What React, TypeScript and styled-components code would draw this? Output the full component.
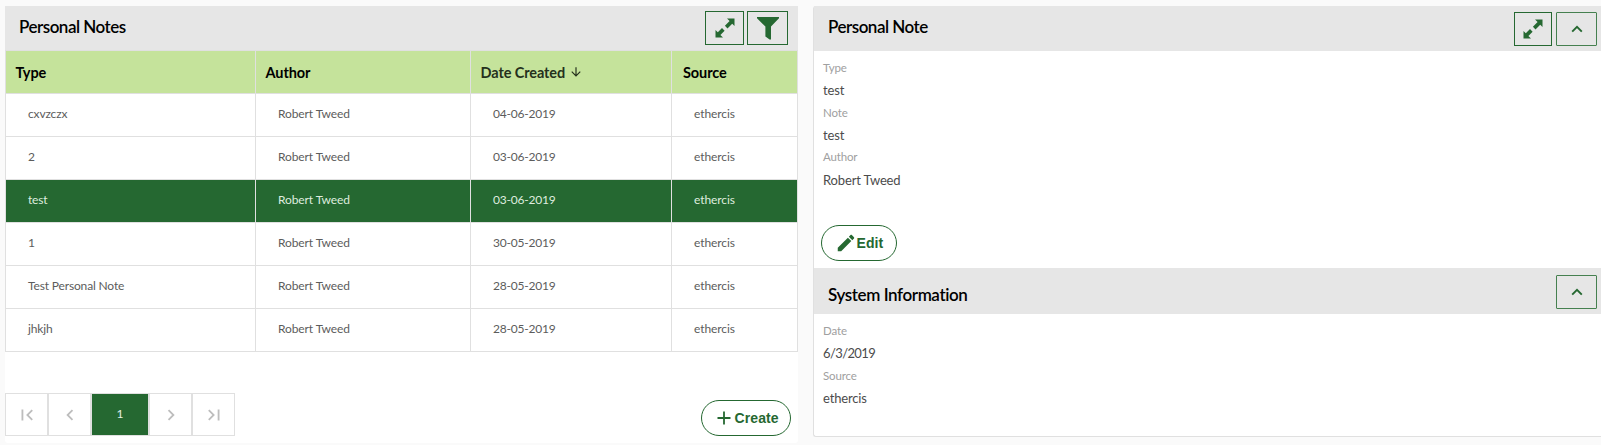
import React from 'react';
import styled, { createGlobalStyle, css } from 'styled-components';

const GREEN = '#256831';
const LINE = '#e0e0e0';

const GlobalStyle = createGlobalStyle`
  * { box-sizing: border-box; }
  body {
    margin: 0;
    background: #fafafa;
    font-family: Lato, sans-serif;
    overflow: hidden;
  }
  svg { display: block; flex: none; }
`;

const Page = styled.main`
  display: flex;
  align-items: flex-start;
  gap: 15px;
  height: 445px;
  padding: 6px 0 0 5px;
`;

const ListPanel = styled.section`
  display: flex;
  flex-direction: column;
  width: 793px;
  height: 437px;
  background: #fff;
  border-radius: 0 0 3px 3px;
`;

const DetailPanel = styled.section`
  flex: 1;
  height: 431px;
  background: #fff;
  border-left: 1px solid ${LINE};
  border-bottom: 1px solid ${LINE};
  border-radius: 3px 0 0 3px;
`;

const PanelHeader = styled.header<{ $height: number; $right: number; $top: number }>`
  display: flex;
  align-items: flex-start;
  height: ${p => p.$height}px;
  padding: ${p => p.$top}px ${p => p.$right}px 0 14px;
  background: #e6e6e6;
`;

const Title = styled.h2<{ $drop?: number; $spacing: number }>`
  flex: 1;
  margin: ${p => p.$drop ?? 0}px 0 0;
  font-size: 17px;
  line-height: 20px;
  font-weight: 600;
  letter-spacing: ${p => p.$spacing}px;
  color: #000;
`;

const SquareButton = styled.button<{ $width: number; $gap?: number; $soft?: boolean }>`
  display: flex;
  align-items: center;
  justify-content: center;
  width: ${p => p.$width}px;
  height: 34px;
  margin: 0 0 0 ${p => p.$gap ?? 0}px;
  padding: 0;
  background: transparent;
  border: 1px solid ${p => (p.$soft ? '#45804f' : GREEN)};
  border-radius: ${p => (p.$soft ? 1 : 0)}px;
  color: ${GREEN};
`;

const Table = styled.div`
  border: 1px solid ${LINE};
  border-bottom: 0;
`;

const Row = styled.div<{ $selected?: boolean }>`
  display: grid;
  grid-template-columns: 250px 215px 201px 1fr;
  height: 43px;
  border-bottom: 1px solid ${LINE};
  background: ${p => (p.$selected ? GREEN : '#fff')};
  color: ${p => (p.$selected ? '#dfecdf' : '#5c5c5c')};
`;

const HeadRow = styled(Row)`
  background: #c5e39b;
  color: #000;
`;

const cellBase = css`
  display: flex;
  align-items: center;
  border-right: 1px solid ${LINE};
  white-space: nowrap;
  &:last-child { border-right: 0; }
`;

const HeadCell = styled.div<{ $sorted?: boolean }>`
  ${cellBase}
  padding: 0 0 0 9.5px;
  font-size: 14.5px;
  font-weight: 700;
  letter-spacing: -0.1px;
  color: ${p => (p.$sorted ? '#24301c' : '#000')};
  svg { margin-left: 4px; }
  &:last-child { padding-left: 11px; }
`;

const Cell = styled.div<{ $spacing?: number }>`
  ${cellBase}
  padding: 0 0 4px 22px;
  font-size: 12px;
  letter-spacing: ${p => p.$spacing ?? -0.1}px;
`;

const Footer = styled.footer`
  display: flex;
  flex: 1;
  align-items: flex-end;
  justify-content: space-between;
  padding: 0 7px 7px 0;
`;

const Pager = styled.nav`
  display: flex;
`;

const PageButton = styled.button<{ $current?: boolean }>`
  display: flex;
  align-items: center;
  justify-content: center;
  width: ${p => (p.$current ? 58 : 43)}px;
  height: 43px;
  padding: ${p => (p.$current ? '0 0 2px' : '0')};
  border: 1px solid ${LINE};
  background: ${p => (p.$current ? GREEN : '#fff')};
  color: ${p => (p.$current ? '#e4efe4' : '#bdbdbd')};
  font: 12px Lato, sans-serif;
`;

const PillButton = styled.button<{ $width: number; $lead: number; $gap: number }>`
  display: flex;
  align-items: center;
  width: ${p => p.$width}px;
  height: 36px;
  padding: 0 0 0 ${p => p.$lead}px;
  gap: ${p => p.$gap}px;
  background: #fff;
  border: 1px solid ${GREEN};
  border-radius: 18px;
  color: ${GREEN};
  font: bold 14px 'Liberation Sans', Arial, sans-serif;
  letter-spacing: 0.1px;
`;

const Details = styled.dl<{ $height: number }>`
  display: flex;
  flex-direction: column;
  height: ${p => p.$height}px;
  margin: 0;
  padding: 6px 0 0 9px;
`;

const Label = styled.dt`
  height: 22px;
  font-size: 11.5px;
  line-height: 22px;
  letter-spacing: -0.15px;
  color: #a0a0a0;
`;

const Value = styled.dd<{ $spacing?: number; $line?: number }>`
  height: 22.7px;
  margin: 0;
  font-size: 13px;
  line-height: ${p => p.$line ?? 23}px;
  letter-spacing: ${p => p.$spacing ?? -0.15}px;
  color: #4c4c4c;
`;

const EditBar = styled.div`
  height: 43px;
  padding-left: 7px;
`;

const ExpandIcon = () => (
  <svg width="20" height="20" viewBox="0 0 20 20" fill="currentColor">
    <path d="M12 0.5h7.5V8l-2.3-2.3-4.7 4.7-2.6-2.6 4.7-4.7z" />
    <path d="M8 19.5H0.5V12l2.3 2.3 4.2-4.2 2.6 2.6-4.2 4.2z" />
  </svg>
);

const FunnelIcon = () => (
  <svg width="22" height="23" viewBox="0 0 22 23" fill="currentColor">
    <path d="M0 0h22v1.3L14 9.6v12.9h-1.4L8.4 19.6V9.6L0 1.3z" />
  </svg>
);

const ChevronIcon = () => (
  <svg width="12" height="8" viewBox="0 0 12 8" fill="none" stroke="currentColor" strokeWidth="1.9">
    <path d="M1.2 6.6L6 1.8l4.8 4.8" />
  </svg>
);

const SortArrow = () => (
  <svg width="14" height="14" viewBox="0 0 24 24" fill="currentColor">
    <path d="M20 12l-1.41-1.41L13 16.17V4h-2v12.17l-5.58-5.59L4 12l8 8 8-8z" />
  </svg>
);

const pagerPaths = {
  first: 'M18.41 16.59L13.82 12l4.59-4.59L17 6l-6 6 6 6zM6 6h2v12H6z',
  prev: 'M15.41 7.41L14 6l-6 6 6 6 1.41-1.41L10.83 12z',
  next: 'M10 6L8.59 7.41 13.17 12l-4.58 4.59L10 18l6-6z',
  last: 'M5.59 7.41L10.18 12l-4.59 4.59L7 18l6-6-6-6zM16 6h2v12h-2z',
};

const PagerIcon = ({ name }: { name: keyof typeof pagerPaths }) => (
  <svg width="22" height="22" viewBox="0 0 24 24" fill="currentColor">
    <path d={pagerPaths[name]} />
  </svg>
);

const PlusIcon = () => (
  <svg width="14" height="14" viewBox="0 0 14 14" fill="none" stroke="currentColor" strokeWidth="1.8">
    <path d="M.5 7h13M7 .5v13" />
  </svg>
);

const PencilIcon = () => (
  <svg width="22" height="22" viewBox="0 0 24 24" fill="currentColor">
    <path d="M3 17.25V21h3.75L17.81 9.94l-3.75-3.75L3 17.25zM20.71 7.04c.39-.39.39-1.02 0-1.41l-2.34-2.34c-.39-.39-1.02-.39-1.41 0l-1.83 1.83 3.75 3.75 1.83-1.83z" />
  </svg>
);

const notes = [
  { type: 'cxvzczx', date: '04-06-2019' },
  { type: '2', date: '03-06-2019' },
  { type: 'test', date: '03-06-2019', selected: true },
  { type: '1', date: '30-05-2019' },
  { type: 'Test Personal Note', date: '28-05-2019' },
  { type: 'jhkjh', date: '28-05-2019' },
];

export default function App() {
  return (
    <>
      <GlobalStyle />
      <Page>
        <ListPanel>
          <PanelHeader $height={44} $top={5} $right={10}>
            <Title $drop={6} $spacing={-0.5}>Personal Notes</Title>
            <SquareButton $width={39} aria-label="Expand"><ExpandIcon /></SquareButton>
            <SquareButton $width={41} $gap={3} aria-label="Filter"><FunnelIcon /></SquareButton>
          </PanelHeader>
          <Table>
            <HeadRow>
              <HeadCell>Type</HeadCell>
              <HeadCell>Author</HeadCell>
              <HeadCell $sorted>Date Created <SortArrow /></HeadCell>
              <HeadCell>Source</HeadCell>
            </HeadRow>
            {notes.map((note, i) => (
              <Row key={i} $selected={note.selected}>
                <Cell $spacing={-0.15}>{note.type}</Cell>
                <Cell>Robert Tweed</Cell>
                <Cell $spacing={-0.22}>{note.date}</Cell>
                <Cell>ethercis</Cell>
              </Row>
            ))}
          </Table>
          <Footer>
            <Pager>
              <PageButton aria-label="First"><PagerIcon name="first" /></PageButton>
              <PageButton aria-label="Previous"><PagerIcon name="prev" /></PageButton>
              <PageButton $current>1</PageButton>
              <PageButton aria-label="Next"><PagerIcon name="next" /></PageButton>
              <PageButton aria-label="Last"><PagerIcon name="last" /></PageButton>
            </Pager>
            <PillButton $width={90} $lead={15} $gap={3.5}><PlusIcon />Create</PillButton>
          </Footer>
        </ListPanel>
        <DetailPanel>
          <PanelHeader $height={45} $top={6} $right={4}>
            <Title $drop={5} $spacing={-0.5}>Personal Note</Title>
            <SquareButton $width={38} aria-label="Expand"><ExpandIcon /></SquareButton>
            <SquareButton $width={41} $gap={4} $soft aria-label="Collapse"><ChevronIcon /></SquareButton>
          </PanelHeader>
          <Details $height={174}>
            <Label>Type</Label>
            <Value>test</Value>
            <Label>Note</Label>
            <Value>test</Value>
            <Label>Author</Label>
            <Value $line={25}>Robert Tweed</Value>
          </Details>
          <EditBar>
            <PillButton $width={76} $lead={12.5} $gap={0}><PencilIcon />Edit</PillButton>
          </EditBar>
          <PanelHeader $height={46} $top={7} $right={4}>
            <Title $drop={10} $spacing={-0.4}>System Information</Title>
            <SquareButton $width={41} $soft aria-label="Collapse"><ChevronIcon /></SquareButton>
          </PanelHeader>
          <Details $height={121}>
            <Label>Date</Label>
            <Value $spacing={-0.6}>6/3/2019</Value>
            <Label>Source</Label>
            <Value>ethercis</Value>
          </Details>
        </DetailPanel>
      </Page>
    </>
  );
}
